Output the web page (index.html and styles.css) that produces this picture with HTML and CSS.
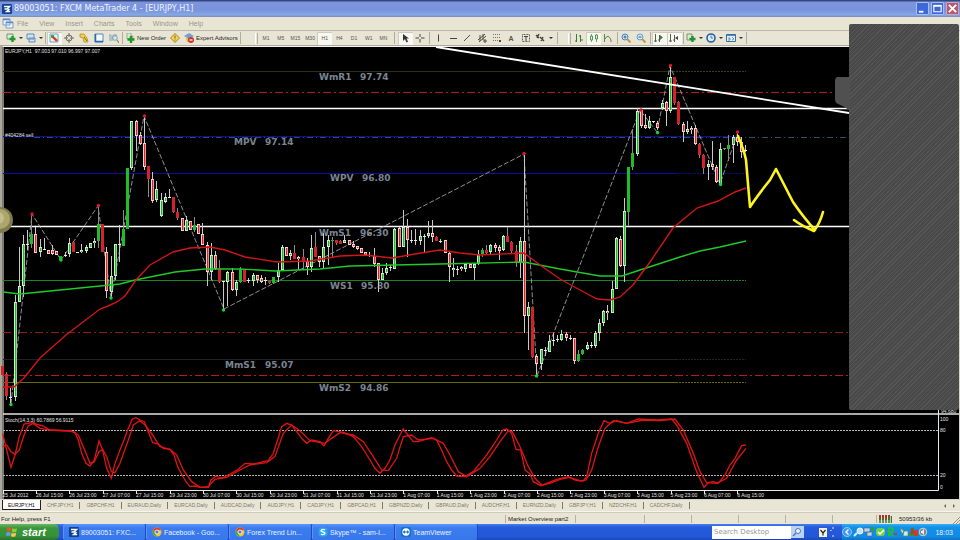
FILE: index.html
```html
<!DOCTYPE html>
<html lang="en">
<head>
<meta charset="utf-8">
<title>89003051: FXCM MetaTrader 4 - [EURJPY,H1]</title>
<link rel="stylesheet" href="styles.css">
</head>
<body>
<svg class="defs" aria-hidden="true">
  <symbol id="chrome" viewBox="0 0 10 10"><circle cx="5" cy="5" r="4.5" fill="#f2c52c"/><path d="M1 3A4.5 4.5 0 0 1 9.2 3.2H5L3.3 6z" fill="#dc3f2c"/><path d="M1 3l2.3 4L5 9.5A4.5 4.5 0 0 1 1 3z" fill="#3fa548"/><circle cx="5" cy="5" r="2" fill="#3f7fe0" stroke="#fff" stroke-width=".8"/></symbol>
  <symbol id="fx" viewBox="0 0 10 10"><rect width="10" height="10" rx="1" fill="#12418f"/><path d="M2 2.6h5.5L5 5H2.5M7.5 5L4.6 7.6H8.2" fill="none" stroke="#fff" stroke-width="1.5"/></symbol>
  <symbol id="bars" viewBox="0 0 10 10"><path d="M1.5 1v8M0 8h3M5.5 2v7M4 7h2" stroke="#55604c" fill="none"/></symbol>
</svg>

<header class="titlebar">
  <svg class="app-icon" viewBox="0 0 10 10"><use href="#fx"/></svg>
  <h1>89003051: FXCM MetaTrader 4 - [EURJPY,H1]</h1>
  <div class="window-buttons">
    <button aria-label="Minimize"><svg viewBox="0 0 12 12"><path d="M2 9.5h5" stroke="#fff" stroke-width="2"/></svg></button>
    <button aria-label="Maximize"><svg viewBox="0 0 12 12"><path d="M2 3h8v6.5H2z" fill="none" stroke="#fff" stroke-width="1.2"/><path d="M1.5 3h9" stroke="#fff" stroke-width="2"/></svg></button>
    <button class="close" aria-label="Close"><svg viewBox="0 0 12 12"><path d="M2 2l8 8M10 2l-8 8" stroke="#fff" stroke-width="2"/></svg></button>
  </div>
</header>

<nav class="menubar">
  <svg class="doc-icon" viewBox="0 0 12 11"><path d="M1 1h7v6H1zM4 4h7v6H4z" fill="#e9f2fa" stroke="#7ba0c8"/><path d="M1 1.5h7M4 4.5h7" stroke="#5c8cc4" stroke-width="1.5"/></svg>
  <button>File</button><button>View</button><button>Insert</button><button>Charts</button><button>Tools</button><button>Window</button><button>Help</button>
</nav>

<div class="toolbar">
  <div class="group drops-two">
    <button class="drop" aria-label="New chart"><svg viewBox="0 0 10 10"><path d="M1 1h6v5H1z" fill="#dce8d8" stroke="#6c9a6c"/><path d="M6.5 3v6M3.5 6h6" stroke="#1d9c25" stroke-width="2.4"/></svg></button>
    <button class="drop" aria-label="Profiles"><svg viewBox="0 0 10 10"><path d="M1 1h7v5H1zM3 5h6v4H3z" fill="#cfe2f4" stroke="#5f8db8"/></svg></button>
  </div>
  <i class="sep"></i>
  <div class="group five">
    <button class="pressed" aria-label="Market Watch"><svg viewBox="0 0 10 10"><path d="M1 1h8v8H1z" fill="#e8f4e8" stroke="#6fa5bd"/><path d="M2 2h3v3H2z" fill="#3ca551"/><path d="M4 4l4 4" stroke="#d23a2b" stroke-width="2.4"/></svg></button>
    <button aria-label="Data Window"><svg viewBox="0 0 10 10"><circle cx="5" cy="5" r="3" fill="none" stroke="#6d6c63"/><path d="M5 0v4M5 6v4M0 5h4M6 5h4" stroke="#6d6c63"/></svg></button>
    <button aria-label="Navigator"><svg viewBox="0 0 10 10"><path d="M1 1h4l3 4 1 4H5L4 5 1 4z" fill="#f0cf4c" stroke="#b4912c" stroke-width=".8"/><path d="M5 4l3 4" stroke="#77642a"/></svg></button>
    <button aria-label="Terminal"><svg viewBox="0 0 10 10"><path d="M1 1h8v8H1z" fill="#f3f8fd" stroke="#5487bd"/><path d="M1.5 1v8M1 8.5h8" stroke="#2e68ac" stroke-width="1.5"/></svg></button>
    <button aria-label="Strategy Tester"><svg viewBox="0 0 10 10"><path d="M1 1v7M3 2v6M5 1v5M7 1v4" stroke="#7c9cb8"/><circle cx="6" cy="5" r="2.3" fill="#d6e8f2" stroke="#6b8ba4" stroke-width=".8"/><path d="M8 7l2 3" stroke="#a08745" stroke-width="1.3"/></svg></button>
  </div>
  <i class="sep"></i>
  <button class="text-button"><svg viewBox="0 0 10 10"><path d="M2 0h4v3h2v3H2z" fill="#dce6d4" stroke="#7c9c72" stroke-width=".7"/><path d="M6 3v7M2.500 6.500h7" stroke="#1f9427" stroke-width="2.4"/></svg>New Order</button>
  <button class="single" aria-label="MetaEditor"><svg viewBox="0 0 10 10"><path d="M5 .5L9.5 5 5 9.5.5 5z" fill="#f2d25a" stroke="#a8842a"/><path d="M5 2.5v3M5 6.5v1" stroke="#806218"/></svg></button>
  <button class="text-button"><svg viewBox="0 0 10 10"><path d="M0 3l5-3 5 3-5 3z" fill="#6fa1d2"/><path d="M2 5h5v4H3z" fill="#e7b43c"/><circle cx="7" cy="7" r="3" fill="#cf3324"/><path d="M5.5 7h3" stroke="#fff" stroke-width="1.2"/></svg>Expert Advisors</button>
  <i class="sep"></i>
  <i class="handle"></i>
  <div class="group frames">
    <button>M1</button><button>M5</button><button>M15</button><button>M30</button><button class="pressed">H1</button><button>H4</button><button>D1</button><button>W1</button><button>MN</button>
  </div>
  <i class="sep"></i>
  <div class="group two">
    <button class="pressed" aria-label="Cursor"><svg viewBox="0 0 10 10"><path d="M3 1v7l2-2 1.500 3.500 1.500-.7L6.500 5.500H9z" fill="#333"/></svg></button>
    <button aria-label="Crosshair"><svg viewBox="0 0 10 10"><path d="M5 1v3M5 6v3.500M.5 5H4M6 5h3.500" stroke="#44433d"/></svg></button>
  </div>
  <i class="sep"></i>
  <div class="group eight">
    <button aria-label="Vertical line"><svg viewBox="0 0 10 10"><path d="M5.5 1.5v7" stroke="#44433d"/></svg></button>
    <button aria-label="Horizontal line"><svg viewBox="0 0 10 10"><path d="M2 5.5h7" stroke="#44433d"/></svg></button>
    <button aria-label="Trendline"><svg viewBox="0 0 10 10"><path d="M2 8l6-6" stroke="#55544c"/></svg></button>
    <button aria-label="Channel"><svg viewBox="0 0 10 10"><path d="M1 7l7-6M2 9l7-6M3 2v6M6 1v6M7 7h2v2H7z" stroke="#4c4b44" fill="none"/></svg></button>
    <button aria-label="Fibonacci"><svg viewBox="0 0 10 10"><path d="M1 1.5h8M1 4.5h8M1 7.5h5" stroke="#77756a" stroke-dasharray="1 1"/><path d="M7 8h2" stroke="#444" stroke-width="2"/></svg></button>
    <button class="letter">A</button>
    <button aria-label="Text label"><svg viewBox="0 0 10 10"><path d="M1.5 1.5h7v7h-7z" fill="none" stroke="#66645a" stroke-dasharray="1 .5"/><path d="M3 3.5h4M5 3.5V8" stroke="#44433d"/></svg></button>
    <button aria-label="Arrows"><svg viewBox="0 0 10 10"><path d="M1 2l3 3M4 1L2 5M5 4l4 4M8 4L6 8" stroke="#44433d" stroke-width="1.4"/></svg></button>
  </div>
  <i class="caret"></i>
  <i class="sep"></i>
  <i class="handle second"></i>
  <div class="group three">
    <button aria-label="Bar chart"><svg viewBox="0 0 10 10"><path d="M2.5 1v8M1 8h2M6.5 2v7M5 3h1.5M7 7h2" stroke="#3c7b3c"/></svg></button>
    <button class="pressed" aria-label="Candlesticks"><svg viewBox="0 0 10 10"><path d="M2.5 1v8M7.5 1v8" stroke="#6dab6d"/><path d="M1.5 3h2v4h-2zM6.5 2h2v4h-2z" fill="#dff2df" stroke="#4c9b4c"/></svg></button>
    <button aria-label="Line chart"><svg viewBox="0 0 10 10"><path d="M1.5 1v8M2 6q3-6 6 1v2" fill="none" stroke="#5b845b"/></svg></button>
  </div>
  <i class="sep"></i>
  <div class="group two">
    <button aria-label="Zoom in"><svg viewBox="0 0 10 10"><circle cx="4" cy="4" r="3" fill="#cfe6fa" stroke="#4682c0"/><path d="M4 2.5v3M2.5 4h3" stroke="#2766a8"/><path d="M6 6l3.5 3.5" stroke="#c29a3a" stroke-width="2"/></svg></button>
    <button aria-label="Zoom out"><svg viewBox="0 0 10 10"><circle cx="4" cy="4" r="3" fill="#cfe6fa" stroke="#6c9dc8"/><path d="M2.5 4h3" stroke="#2766a8"/><path d="M6 6l3.5 3.5" stroke="#c29a3a" stroke-width="2"/></svg></button>
  </div>
  <i class="sep"></i>
  <div class="group two">
    <button class="pressed" aria-label="Auto scroll"><svg viewBox="0 0 10 10"><use href="#bars"/><path d="M6 2l3 2.5L6 7z" fill="#3f7b45"/></svg></button>
    <button class="pressed" aria-label="Chart shift"><svg viewBox="0 0 10 10"><use href="#bars"/><path d="M9 3L6 5l3 2z" fill="#444"/></svg></button>
  </div>
  <i class="sep"></i>
  <div class="group drops-three">
    <button class="drop" aria-label="Indicators"><svg viewBox="0 0 10 10"><path d="M1 1h5v6H1z" fill="#dbe7d6" stroke="#76956c"/><path d="M6.5 3v6M3.5 6h6" stroke="#1f9427" stroke-width="2.4"/></svg></button>
    <button class="drop" aria-label="Periods"><svg viewBox="0 0 10 10"><circle cx="5" cy="5" r="4" fill="#d8ebfb" stroke="#245f9f" stroke-width="1.6"/><path d="M5 2.5V5h2" stroke="#447" fill="none" stroke-width=".7"/></svg></button>
    <button class="drop" aria-label="Templates"><svg viewBox="0 0 10 10"><path d="M.5 1.5h9v7h-9z" fill="#e0eefa" stroke="#376ea6"/><path d="M.5 2h9" stroke="#376ea6" stroke-width="1.6"/><path d="M2 5h2v2H2M6 4l2 2-2 1" stroke="#577d9c" fill="none" stroke-width=".8"/></svg></button>
  </div>
  <i class="sep"></i>
</div>

<main class="chart-area">
<svg class="chart" viewBox="0 45 960 455" role="img" aria-label="EURJPY hourly candlestick chart with stochastic oscillator">
  <path d="M0 45h960v2H2v453H0z" fill="#aca899"/>
  <path d="M3 500V46.5H960" fill="none" stroke="#f4f4ee"/>
  <g fill="none">
    <path d="M3 71.5H670" stroke="#2d2d10"/><path d="M670 71.5h76" stroke="#3c3c20" stroke-dasharray="2 1"/>
    <path d="M3 92.5H849M3 375.5H849" stroke="#b81c22" stroke-dasharray="8 3 2 3"/>
    <path d="M3 332.5H849" stroke="#94181c" stroke-dasharray="8 3 2 3"/>
    <path d="M3 136.5H738M3 173.5H676" stroke="#0c0ca0"/><path d="M676 173.5h70" stroke="#0a0a80" stroke-dasharray="2 1"/>
    <path d="M34 137.5H849" stroke="#26506c" stroke-dasharray="6 3 1 3"/>
    <path d="M3 280.5H676" stroke="#188420"/><path d="M676 280.5h70" stroke="#188420" stroke-dasharray="2 1"/>
    <path d="M3 359.5H676" stroke="#222"/><path d="M676 359.5h70" stroke="#222" stroke-dasharray="2 1"/>
    <path d="M3 382.5H676" stroke="#68680e"/><path d="M676 382.5h70" stroke="#68680e" stroke-dasharray="2 1"/>
  </g>
  <g class="level">
    <text x="319" y="80">WmR1</text><text x="360" y="80">97.74</text>
    <text x="234" y="145">MPV</text><text x="265" y="145">97.14</text>
    <text x="330" y="181">WPV</text><text x="362" y="181">96.80</text>
    <text x="319" y="236">WmS1</text><text x="360" y="236">96.30</text>
    <text x="330" y="289">WS1</text><text x="361" y="289">95.80</text>
    <text x="225" y="368">MmS1</text><text x="265" y="368">95.07</text>
    <text x="319" y="391">WmS2</text><text x="360" y="391">94.86</text>
  </g>
  <path d="M3 108.5H849M3 226.5H849" stroke="#fff" stroke-width="1.3"/>
  <path d="M11 404L32 214 61 260 98 206 111 298 144 116 224 309 524 154 537 376 640 110 657 132 670 66 720 184 738 132" fill="none" stroke="#b4b4b4" stroke-width=".8" stroke-dasharray="5 2"/>
  <g id="candles"></g>
  <path d="M3 292L20 294 60 290 90 287 120 284 135 280 150 277 175 272 205 269 240 269 275 271 320 269 350 266 395 265 440 264 524 262 560 269 600 276 622 276 640 270 680 257 700 251 720 247 746 241" fill="none" stroke="#1fc92a" stroke-width="1.4"/>
  <path d="M3 387h11L24 378 40 358 66 335 100 309 108 306 117 302 125 296 136 280 150 265 173 252 190 248 210 247 225 250 245 257 277 262 310 261 340 256 365 255 392 258 415 254 440 250 460 253 480 255 524 253 540 265 560 279 580 290 597 299 610 300 620 297 633 285 650 262 673 228 697 208 718 201 735 192 746 188" fill="none" stroke="#d01616" stroke-width="1.4"/>
  <g fill="#e3122b"><circle cx="32" cy="214" r="1.7"/><circle cx="98.5" cy="205.5" r="1.7"/><circle cx="144.5" cy="116" r="1.7"/><circle cx="524" cy="153.5" r="1.7"/><circle cx="641" cy="110" r="1.7"/><circle cx="670.5" cy="65.5" r="1.7"/><circle cx="737.5" cy="132" r="1.7"/></g>
  <g fill="#15d52b"><circle cx="11" cy="404.5" r="1.7"/><circle cx="61" cy="260" r="1.7"/><circle cx="111" cy="298" r="1.7"/><circle cx="223.5" cy="310" r="1.7"/><circle cx="536.5" cy="376" r="1.7"/><circle cx="657.5" cy="132.5" r="1.7"/><circle cx="720.5" cy="184.5" r="1.7"/></g>
  <path d="M436 47L849 113" stroke="#fff" stroke-width="1.8"/>
  <path d="M738 136Q744 150 746 160L748 184 750 207Q757 196 770 180L776 169 793 202Q804 218 815 230M794 220Q802 226 814 231Q820 223 823 212" fill="none" stroke="#fdf51d" stroke-width="2.6" stroke-linecap="round" stroke-linejoin="round"/>
  <circle cx="0" cy="220" r="13" fill="#817b4b"/><circle cx="0" cy="219" r="10" fill="#aca56d"/><circle cx="-2" cy="218" r="6" fill="#c3bd8c"/>
  <g class="small">
    <text x="5" y="53">EURJPY,H1&#160; 97.003 97.010 96.997 97.007</text>
    <text x="5" y="136.5">#404284 sell</text>
    <text x="5" y="422">Stoch(14,3,3) 60.7869 56.9115</text>
    <text x="941" y="413">94.680</text><text x="940" y="420.5">100</text><text x="940" y="432">80</text><text x="940" y="477">20</text><text x="940" y="489">0</text>
  </g>
  <path d="M3 414H960" stroke="#e4e4dc" stroke-width="1.6"/>
  <path d="M938.5 410V490.5H3" fill="none" stroke="#e8e8e8"/>
  <path d="M3 430.5H938M3 475.5H938" stroke="#b4b4b4" stroke-dasharray="2 1"/>
  <g class="stoch">
    <g transform="translate(0 400) scale(.3333)">
      <path d="M8 100L20 150 33 202 45 165 58 110 72 72 96 68 120 85 150 90 210 93 225 98 235 120 245 160 258 190 270 198 283 180 297 123 308 150 320 205 334 235 345 190 360 150 372 120 385 85 397 57 408 53 420 60 433 65 445 95 458 128 475 132 490 145 510 148 522 165 533 200 546 225 558 245 570 260 585 258 600 262 625 262 633 240 648 228 665 235 690 222 715 208 735 190 760 192 790 185 805 182 820 160 833 120 845 80 860 70 875 75 890 95 905 115 920 130 935 120 960 125 972 138 985 115 1000 92 1030 97 1060 110 1085 140 1110 180 1125 205 1140 220 1155 205 1170 180 1185 135 1200 105 1210 87 1220 100 1240 125 1255 125 1295 113 1310 120 1325 150 1340 185 1355 210 1370 228 1395 230 1420 215 1440 190"/>
      <path d="M8 140L20 135 33 155 45 163 58 150 72 105 85 78 100 70 130 78 150 90 215 93 235 105 258 160 270 190 283 185 297 155 308 148 320 170 334 215 345 218 360 190 385 120 400 75 420 62 435 75 458 105 480 140 510 148 530 165 550 210 575 245 600 262 625 260 645 238 680 232 720 210 750 195 800 188 825 170 850 100 875 75 900 92 930 122 975 130 995 115 1020 98 1060 105 1090 125 1120 170 1145 210 1165 212 1190 175 1210 110 1235 105 1255 120 1300 115 1330 130 1350 165 1375 215 1400 230 1440 205"/>
    </g>
    <g transform="translate(480 400) scale(.3333)">
      <path d="M0 190L20 165 50 120 68 90 80 87 95 100 108 148 122 150 135 210 150 222 160 245 183 257 200 250 230 238 265 230 285 240 310 243 320 230 335 160 355 100 372 62 390 70 410 62 440 70 475 57 530 60 575 57 590 75 620 130 650 215 672 262 685 248 700 245 715 250 735 225 750 195 765 175 785 137 798 135"/>
      <path d="M0 205L30 170 60 125 85 92 97 95 120 140 145 200 165 235 185 255 210 250 240 238 270 232 300 243 318 240 335 210 355 140 375 85 400 62 440 70 490 60 540 62 585 57 610 90 640 160 660 215 680 248 710 250 740 235 770 180 798 145"/>
    </g>
  </g>
  <g id="time-axis" class="small"></g>
  <path d="M959.5 45V500M0 499.5H960" stroke="#d8d4c4"/>
</svg>
</main>

<nav class="chart-tabs">
  <a class="active" href="#c1">EURJPY,H1</a><a href="#c2">CHFJPY,H1</a><a href="#c3">GBPCHF,H1</a><a href="#c4">EURAUD,Daily</a><a href="#c5">EURCAD,Daily</a><a href="#c6">AUDCAD,Daily</a><a href="#c7">AUDJPY,H1</a><a href="#c8">CADJPY,H1</a><a href="#c9">GBPCAD,H1</a><a href="#c10">GBPNZD,Daily</a><a href="#c11">GBPAUD,Daily</a><a href="#c12">AUDCHF,H1</a><a href="#c13">EURNZD,Daily</a><a href="#c14">GBPJPY,H1</a><a href="#c15">NZDCHF,H1</a><a href="#c16">CADCHF,Daily</a>
  <div class="tab-scroll"><button aria-label="Scroll tabs left"><svg viewBox="0 0 6 6"><path d="M4 1v4L2 3z" fill="#6a685e"/></svg></button><button aria-label="Scroll tabs right"><svg viewBox="0 0 6 6"><path d="M2 1v4l2-2z" fill="#6a685e"/></svg></button></div>
</nav>

<div class="statusbar">
  <span>For Help, press F1</span><span>Market Overview part2</span><span></span><span></span><span></span><span></span><span></span><span></span>
  <span class="traffic"><svg viewBox="0 0 13 8"><path d="M1 0v5M4 0v5M7 0v5M10 0v5" stroke="#a5372b" stroke-width="2"/><path d="M1 4v4M4 3v5M7 4v4M10 2v6M12.5 1v7" stroke="#357b35" stroke-width="1.5"/></svg>50953/36 kb</span>
  <svg class="grip" viewBox="0 0 8 8"><path d="M1 8l7-7M4 8l4-4M7 8l1-1" stroke="#99968a"/></svg>
</div>

<footer class="taskbar">
  <button class="start"><svg viewBox="0 0 12 12"><path d="M1 2q2-1.500 4.500 0L5 5.500Q3 4.500.5 5.500z" fill="#e8532c"/><path d="M6.300 2.300q2 1 4.700 0l-.7 3.500q-2 1-4.500 0z" fill="#8ccb3f"/><path d="M.5 6.500q2-1.200 4.300 0L4.200 10Q2 9 0 10z" fill="#5ba0f5"/><path d="M5.600 6.800q2 1 4.600 0L9.500 10.300q-2 1-4.500 0z" fill="#f8cb3c"/></svg>start</button>
  <div class="tasks">
    <button class="task"><svg viewBox="0 0 10 10"><use href="#fx"/></svg>89003051: FXC...</button>
    <button class="task"><svg viewBox="0 0 10 10"><use href="#chrome"/></svg>Facebook - Goo...</button>
    <button class="task"><svg viewBox="0 0 10 10"><use href="#chrome"/></svg>Forex Trend Lin...</button>
    <button class="task"><svg viewBox="0 0 10 10"><rect x=".5" y=".5" width="9" height="9" rx="3" fill="#2aa8e6"/><path d="M7 3Q5 1.700 3.500 3t1.500 2 1.500 2T3 7" fill="none" stroke="#fff" stroke-width="1.3"/></svg>Skype™ - sam-l...</button>
    <button class="task"><svg viewBox="0 0 10 10"><rect width="10" height="10" rx="2" fill="#1473c7"/><circle cx="5" cy="5" r="3.7" fill="#fff"/><path d="M1.500 5L4 3.200v1.200h2V3.200L8.500 5 6 6.800V5.600H4v1.200z" fill="#1473c7"/></svg>TeamViewer</button>
  </div>
  <form class="search">
    <input type="text" aria-label="Search Desktop" placeholder="Search Desktop"><button type="button" aria-label="Search"><svg viewBox="0 0 10 10"><circle cx="6" cy="4" r="2.5" fill="#eaf4ff" stroke="#5077b8"/><path d="M4 6L1 9" stroke="#5077b8" stroke-width="1.5"/></svg></button>
  </form>
  <svg class="lang" viewBox="0 0 24 12"><rect x="1" y="2" width="8" height="9" fill="#f4f2e6"/><path d="M2.500 4l2.500 3 2.500-3M5 6v3.500" fill="none" stroke="#222" stroke-width="1.2"/><path d="M14 2h2M13 4v1M14 10h2" stroke="#dbe9ff" stroke-width="1.2"/></svg>
  <div class="tray">
    <svg viewBox="0 0 86 12">
      <circle cx="5" cy="6" r="4.5" fill="#3f98ea" stroke="#a8d6fa" stroke-width=".8"/><path d="M6.500 3.500L4 6l2.500 2.500" fill="none" stroke="#fff" stroke-width="1.3"/>
      <circle cx="18" cy="5" r="3" fill="#c5def5" stroke="#eef6ff"/><path d="M15 7l-3 3" stroke="#e8eef4" stroke-width="2"/>
      <path d="M22 2h6v4h-6zM25 6h5v4h-5z" fill="#bcd2e8" stroke="#47678f" stroke-width=".6"/><path d="M29 1v4h3V1z" fill="#2aa035"/>
      <rect x="34" y="2" width="9" height="8" rx="3" fill="#74cf45"/><path d="M36 6l2 2 4-4" fill="none" stroke="#fff" stroke-width="1.4"/>
      <path d="M47 10V2h3q2 2 0 4h-3l4 4" fill="none" stroke="#22bb41" stroke-width="2"/><path d="M52 8h3" stroke="#bf372a" stroke-width="1.5"/>
      <path d="M58 2l4 3-2 3zM62 5h4v5h-5z" fill="#d7e7ea" stroke="#3c8d72" stroke-width=".7"/>
      <path d="M69 2h3v7h-4z" fill="#865536"/><path d="M72 4h4v6h-4z" fill="#c2412c"/><path d="M67 8h5v2h-5z" fill="#4c8738"/>
      <circle cx="81" cy="6" r="3.8" fill="#7d868f" stroke="#c8d0d8"/><path d="M79 5h1l2-2v6l-2-2h-1z" fill="#f0f0f0"/>
    </svg>
    <time>18:03</time>
  </div>
</footer>

<aside class="panel">
  <svg viewBox="0 0 16 36"><path d="M16 2H3Q1 3 1 6V24Q1 28 4 29Q10 31 16 36z" fill="#505050"/></svg>
</aside>
<script src="chart.js"></script>
</body>
</html>
```
FILE: styles.css
```css
* { box-sizing: border-box; }
body {
  margin: 0;
  min-height: 100vh;
  display: flex;
  flex-direction: column;
  position: relative;
  overflow-x: hidden;
  background: #e9e5d5;
  font-family: "Liberation Sans", Arial, sans-serif;
  font-size: 6px;
  color: #222;
}
button { border: 0; padding: 0; margin: 0; background: none; font: inherit; color: inherit; }
svg { display: block; flex: none; }
.defs { position: absolute; width: 0; height: 0; }

.titlebar {
  display: flex; align-items: center; height: 17px; padding: 0 1px 0 2px;
  background: linear-gradient(#34477c 0, #34477c 1px, #7c95de 2px, #7a93dc 10px, #82a9e6 15px, #8187b0 17px);
}
.app-icon { width: 10px; height: 10px; margin-right: 2px; }
.titlebar h1 { margin: 0; flex: 1; font-family: "DejaVu Sans", sans-serif; font-size: 8px; font-weight: normal; color: #eef3ff; white-space: nowrap; }
.window-buttons { display: flex; gap: 2px; }
.window-buttons button { width: 13px; height: 13px; border: 1px solid #a9bdf2; border-radius: 1px; background: #3c68d8; }
.window-buttons .close { background: #b55b70; border-color: #cba4c0; }

.menubar { display: flex; align-items: center; height: 13px; padding-left: 2px; color: #99968a; font-size: 7px; }
.doc-icon { width: 12px; height: 11px; margin-right: 3px; }
.menubar button { margin-right: 11px; }

.toolbar { display: flex; align-items: center; height: 15px; border-top: 1px solid #bcb8a8; color: #25241f; white-space: nowrap; }
.toolbar > * { flex: none; }
.toolbar svg { width: 10px; height: 10px; }
.group { display: flex; height: 13px; margin: 0 1px; }
.group button { flex: 1; display: flex; align-items: center; justify-content: center; }
.group .pressed { background: #f8f7f1; box-shadow: inset 1px 1px #d0ccbd; }
.sep { width: 1px; height: 12px; background: #b1ad9e; }
.handle { width: 3px; height: 11px; margin-left: 14px; border-left: 1px solid #fff; border-right: 1px solid #b1ad9e; }
.handle.second { margin-left: 10px; }
.drop::after, .caret { content: ""; margin-left: 3px; border: 2px solid transparent; border-top-color: #333; border-bottom: 0; }
.caret { margin: 0 4px 0 0; }
.drops-two { width: 40px; margin-left: 4px; }
.five { width: 74px; }
.frames { width: 132px; margin-right: 3px; font-size: 5px; color: #55534a; }
.frames + .sep { margin-right: 2px; }
.two { width: 30px; }
.eight { width: 117px; }
.three { width: 44px; }
.drops-three { width: 60px; }
.letter { font-size: 7px; font-weight: bold; color: #55534a; }
.text-button { display: flex; align-items: center; gap: 2px; padding: 0 2px; }
.single { margin: 0 2px; }

.chart-area { flex: 1; background: #000; }
.chart { width: 100%; height: auto; }
.level { font: bold 9px "DejaVu Sans", sans-serif; fill: #7b8492; }
.small { font-size: 5px; fill: #e2e2e2; }
.stoch path { fill: none; stroke: #dd1414; stroke-width: 4; }

.chart-tabs { display: flex; align-items: center; height: 12px; padding-left: 2px; font-size: 5px; border-bottom: 1px solid #f6f4ec; }
.chart-tabs a { padding: 0 6px; color: #7c796d; text-decoration: none; border-right: 1px solid #7c796d; line-height: 7px; white-space: nowrap; }
.chart-tabs .active { align-self: flex-start; padding: 1px 5px 0; line-height: 8px; color: #000; background: #fff; border: 1px solid #222; border-top: 0; }
.tab-scroll { display: flex; gap: 3px; margin-left: auto; padding-right: 3px; }
.tab-scroll svg { width: 6px; height: 6px; }

.statusbar { display: grid; grid-template-columns: 505fr 70fr 69fr 47fr 47fr 47fr 47fr 44fr 72fr 12fr; align-items: center; height: 12px; white-space: nowrap; border-top: 1px solid #d0ccbc; }
.statusbar span { height: 8px; line-height: 8px; padding-left: 2px; border-left: 1px solid #b6b2a2; }
.statusbar span:first-child { padding-left: 1px; border: 0; }
.statusbar .traffic { display: flex; align-items: center; gap: 7px; }
.traffic svg { width: 13px; height: 8px; }
.grip { width: 8px; height: 8px; justify-self: end; align-self: end; }

.taskbar { display: flex; align-items: stretch; height: 16px; background: linear-gradient(#4b80ec, #255bdc 3px, #2258d6 13px, #1c47b4); color: #e8f0ff; font-size: 7px; }
.start { display: flex; align-items: center; gap: 4px; width: 59px; padding-left: 6px; border-radius: 0 5px 5px 0; background: linear-gradient(#6cb566, #3a963a 4px, #36903a 12px, #28742c); color: #fff; font-size: 11px; font-weight: bold; font-style: italic; }
.start svg { width: 12px; height: 12px; }
.tasks { display: flex; flex: 1; margin-left: 4px; }
.task { display: flex; align-items: center; gap: 2px; flex: 0 1 83px; min-width: 0; padding-left: 5px; border-right: 1px solid #1c4bbd; border-left: 1px solid #5a92fa; border-radius: 2px; background: linear-gradient(#5c96fa, #3b7cf0 4px, #3877ea); white-space: nowrap; overflow: hidden; }
.task svg { width: 10px; height: 10px; }
.search { display: flex; align-items: center; margin: 0 14px 0 0; }
.search input { width: 79px; height: 13px; padding: 0 2px; border: 0; background: #fff; font: 7px "DejaVu Sans", sans-serif; }
.search input::placeholder { color: #9a9a92; opacity: 1; }
.search button { width: 13px; height: 12px; padding: 1px; background: #bcd2f4; }
.search svg { width: 10px; height: 10px; }
.lang { width: 24px; height: 12px; align-self: center; }
.tray { display: flex; align-items: center; justify-content: space-between; width: 118px; padding-right: 7px; background: linear-gradient(#35b1f6, #1490e8 3px, #118ae2 13px, #0e6fc0); }
.tray svg { width: 86px; height: 12px; }

.panel { position: absolute; top: 24px; right: 1px; width: 110px; height: 386px; border-radius: 2px; background: repeating-linear-gradient(135deg, #494949 0, #494949 2px, #565656 2px, #565656 3px); }
.panel svg { position: absolute; left: -15px; top: 51px; width: 16px; height: 36px; }
```
FILE: chart.js
```js
// One row per hour: wick top, body top, body bottom, wick bottom, style.
// G/R are solid bodies, g/r are outlined bodies, d is a doji.
const rows = `366 366 375 375 R|372 374 396 400 R|388 397 398 404 d|295 302 397 401 g|247 286 302 302 g|235 244 286 297 g|230 244 245 250 d|214 234 244 248 G
227 234 253 253 r|239 247 252 257 g|238 249 250 250 d|250 250 254 254 r|245 250 254 255 r|251 251 255 255 r|256 256 260 260 G|252 255 256 257 d
238 243 254 257 g|241 242 252 252 R|252 252 253 253 d|244 250 252 253 g|245 247 251 253 g|243 243 248 248 g|238 241 243 248 g|206 224 241 248 G
224 224 252 252 R|247 252 291 298 r|256 276 292 297 g|244 244 276 280 g|225 244 245 262 d|210 229 246 246 G|168 168 229 229 G|121 121 168 170 g
120 121 136 151 r|132 135 144 145 r|116 143 167 170 r|166 166 179 197 R|172 179 201 203 r|181 189 200 202 g|193 200 216 217 g|193 197 202 203 g
189 197 198 198 d|197 197 212 213 R|208 212 218 220 R|218 218 231 231 r|216 220 231 231 g|221 221 230 230 r|217 225 230 232 G|224 224 234 234 r
223 234 245 245 r|242 245 272 286 r|243 255 272 280 g|251 255 269 270 r|260 268 282 283 R|281 281 282 309 d|271 272 282 306 g|268 272 290 291 r
280 282 290 296 g|267 269 282 283 G|269 269 282 282 R|278 280 281 283 d|273 275 281 286 g|275 275 280 283 r|275 278 282 283 r|277 280 281 285 d
281 281 283 284 R|277 277 283 284 G|263 270 277 282 g|245 247 270 270 g|247 247 256 256 r|250 253 256 260 g|245 253 259 259 R|256 257 259 270 r
249 257 262 270 R|258 261 267 275 r|235 248 267 272 g|232 247 257 257 R|256 256 262 267 r|233 247 262 268 g|235 240 247 265 g|237 240 241 258 G
240 240 243 245 R|240 241 244 244 R|235 240 243 243 g|240 240 245 245 r|241 244 247 248 r|246 246 249 250 r|248 248 253 253 r|252 252 255 255 r
252 255 256 257 d|248 256 264 267 r|263 263 280 292 r|268 273 280 280 g|263 268 273 275 g|265 267 268 271 d|228 229 269 269 g|227 228 247 247 r
210 227 247 247 g|219 227 240 257 r|230 240 241 243 d|229 240 241 245 d|230 236 241 245 g|234 236 237 252 d|221 233 236 238 g|220 233 237 242 r
236 237 241 241 R|239 241 242 243 d|240 240 253 253 r|252 253 267 282 r|258 268 270 277 g|266 269 270 275 d|266 267 269 271 r|263 264 269 272 g
263 264 268 268 r|263 264 268 280 g|250 254 264 265 g|248 250 254 257 G|245 250 253 255 R|244 245 252 254 g|243 245 248 252 r|245 247 251 260 r
235 236 250 251 g|227 236 242 242 R|241 242 251 253 R|245 251 263 267 R|237 241 263 278 g|154 241 316 333 r|302 307 316 350 g|307 307 357 358 R
354 356 364 375 r|349 349 364 370 g|347 350 351 356 d|335 341 352 352 g|333 340 341 346 d|335 339 340 342 d|330 334 340 341 g|332 334 338 341 r
335 338 339 340 d|338 338 361 364 r|350 354 361 362 G|349 350 354 355 G|342 345 349 350 g|342 345 346 348 d|331 333 346 348 g|319 323 333 341 g
310 311 323 326 g|305 311 313 320 r|281 289 313 313 g|237 238 289 289 g|236 239 266 267 r|198 211 266 282 g|167 167 212 226 G|129 153 167 170 G
108 111 154 156 g|108 110 126 128 r|114 125 128 129 r|116 121 128 129 g|121 121 122 123 d|121 123 128 130 r|100 103 108 110 g|101 102 111 126 r
66 77 111 113 g|77 77 103 105 R|101 102 124 125 R|122 124 132 142 r|121 129 132 134 g|126 128 130 134 r|125 128 144 145 r|143 144 155 158 R
154 155 168 174 R|160 164 167 180 g|141 164 167 170 r|165 167 182 183 r|143 149 184 184 g|148 148 149 150 G|135 145 149 161 G|135 137 145 163 g
133 137 142 146 r|137 142 152 158 r|145 150 151 152 d`.split(/[|\n]/);

const FIRST_X = 2.5;
const STEP = 4.175;
const solid = { G: "#1fbd27", R: "#d3222a", g: "#d3efd2", r: "#f5d4d2", d: "#ececec" };
const core = { g: "#25b52c", r: "#d4262b" };

const rect = (x, y, w, h, fill) =>
  `<rect x="${x}" y="${y}" width="${w}" height="${h}" fill="${fill}"/>`;

document.getElementById("candles").innerHTML = rows.map((row, i) => {
  const [top, open, close, bottom, kind] = row.trim().split(" ");
  const x = Math.round(FIRST_X + i * STEP - 0.5);
  const height = close - open;
  let out = rect(x, top, 1, bottom - top, "GR".includes(kind) ? "#8c8c8c" : "#c8c8c8");
  out += rect(x - 1, open, 3, height, solid[kind]);
  if (core[kind]) out += rect(x, +open + 1, 1.4, Math.max(height - 2, 1), core[kind]);
  return out;
}).join("");

const times = ["25 Jul 2012", "26 Jul 15:00", "26 Jul 23:00", "27 Jul 07:00", "27 Jul 15:00",
  "29 Jul 23:00", "30 Jul 07:00", "30 Jul 15:00", "30 Jul 23:00", "31 Jul 07:00", "31 Jul 15:00",
  "31 Jul 23:00", "1 Aug 07:00", "1 Aug 15:00", "1 Aug 23:00", "2 Aug 07:00", "2 Aug 15:00",
  "2 Aug 23:00", "3 Aug 07:00", "3 Aug 15:00", "5 Aug 23:00", "6 Aug 07:00", "6 Aug 15:00"];

document.getElementById("time-axis").innerHTML = times.map((label, i) => {
  const x = 2.5 + i * STEP * 8;
  return rect(Math.round(x), 491, 1, 3, "#e8e8e8") + `<text x="${x}" y="497">${label}</text>`;
}).join("");
```
